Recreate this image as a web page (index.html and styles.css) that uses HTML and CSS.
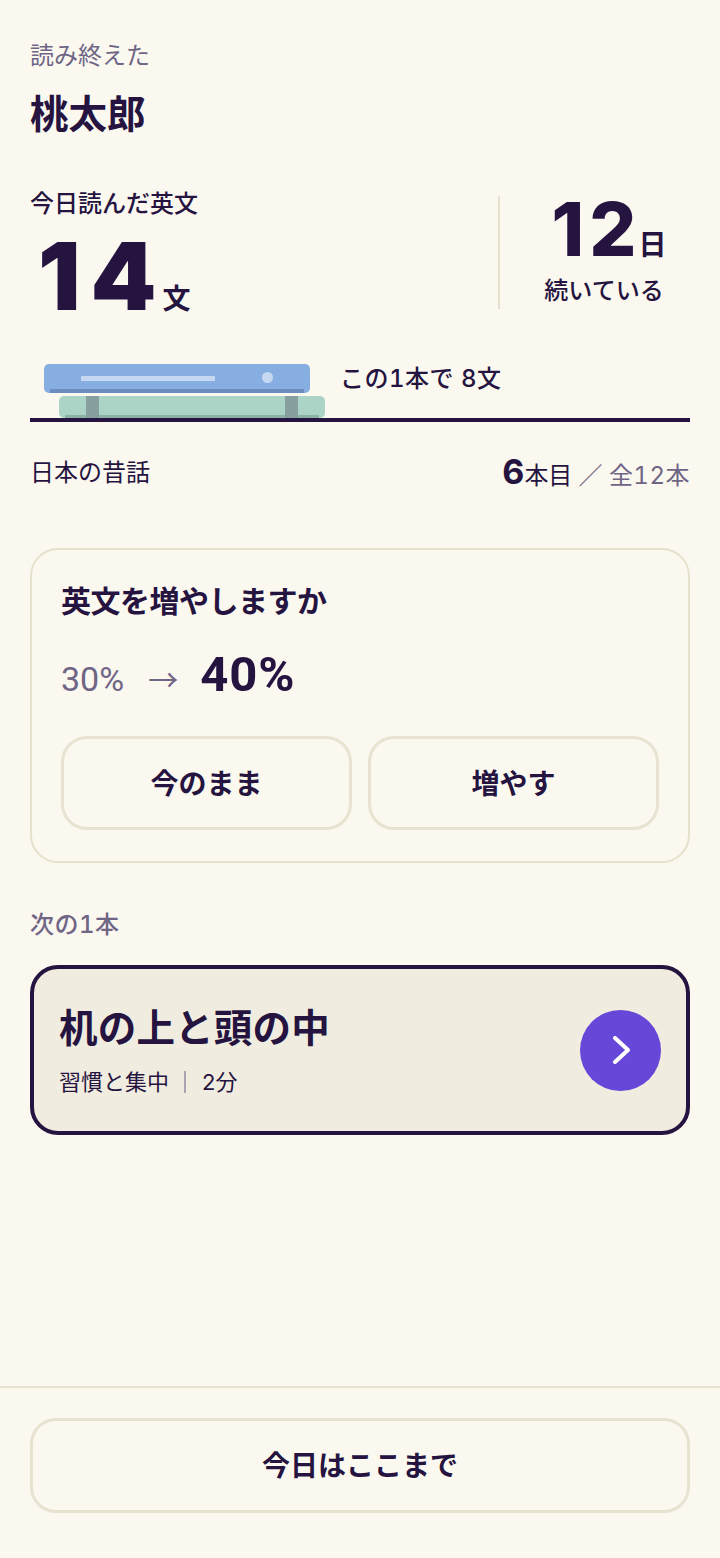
FILE: index.html
```html
<!DOCTYPE html>
<html lang="ja">
<head>
  <meta charset="UTF-8">
  <meta name="viewport" content="width=device-width, initial-scale=1.0">
  <title>桃太郎</title>
  <link rel="stylesheet" href="styles.css">
</head>
<body>
  <div class="page">
    <main class="content">
      <p class="eyebrow">読み終えた</p>
      <h1 class="title">桃太郎</h1>

      <section class="stats">
        <div class="stat-today">
          <p class="stat-label">今日読んだ英文</p>
          <p class="stat-big"><span class="big-num"><span class="big-first">1</span>4</span><span class="big-unit">文</span></p>
        </div>
        <div class="stat-streak">
          <p class="streak-num"><span class="mid-num"><span class="mid-first">1</span>2</span><span class="mid-unit">日</span></p>
          <p class="stat-label">続いている</p>
        </div>
      </section>

      <section class="shelf">
        <svg class="books" width="281" height="54" viewBox="0 0 281 54">
          <rect x="0" y="0" width="266" height="29" rx="5" fill="#86aee0"/>
          <path d="M6 25h254v4H6z" fill="#6b8cbc"/>
          <rect x="37" y="12" width="134" height="5" fill="#c6d8f1"/>
          <circle cx="223.500" cy="13.500" r="5.500" fill="#c6d8f1"/>
          <rect x="15" y="32" width="266" height="22" rx="5" fill="#acd4c6"/>
          <path d="M21 51h254v3H21z" fill="#8eb0a6"/>
          <rect x="42" y="32" width="13" height="22" fill="#889fa0"/>
          <rect x="241" y="32" width="13" height="22" fill="#889fa0"/>
        </svg>
        <p class="shelf-note">この1本で 8文</p>
      </section>

      <div class="series">
        <span class="series-name">日本の昔話</span>
        <span class="series-count"><b>6</b>本目<span class="muted"><span class="slash">／</span>全12本</span></span>
      </div>

      <section class="card">
        <h2 class="card-title">英文を増やしますか</h2>
        <p class="ratio"><span class="ratio-old">30%</span><span class="ratio-arrow">→</span><span class="ratio-new">40%</span></p>
        <div class="choices">
          <button class="choice" type="button">今のまま</button>
          <button class="choice" type="button">増やす</button>
        </div>
      </section>

      <p class="next-label">次の1本</p>
      <a class="next" href="#">
        <div>
          <h2 class="next-title">机の上と頭の中</h2>
          <p class="next-meta">習慣と集中<span class="pipe"></span>2分</p>
        </div>
        <span class="next-go">
          <svg width="24" height="28" viewBox="0 0 24 28"><path d="M6 2l13 12L6 26" fill="none" stroke="#fff" stroke-width="4" stroke-linecap="round" stroke-linejoin="round"/></svg>
        </span>
      </a>
    </main>

    <footer class="footer">
      <button class="finish" type="button">今日はここまで</button>
    </footer>
  </div>
</body>
</html>
```

FILE: styles.css
```css
* {
  box-sizing: border-box;
}

body {
  margin: 0;
  background-color: #fbf8f0;
  color: #261440;
  font-family: Inter, "Noto Sans CJK JP", sans-serif;
}

p, h1, h2 {
  margin: 0;
}

.page {
  height: 1558px;
  display: flex;
  flex-direction: column;
}

.content {
  flex: 1;
  padding: 40px 30px 0;
}

.eyebrow {
  font-size: 24px;
  line-height: 32px;
  color: #6f6585;
}

.title {
  margin-top: 16px;
  font-size: 38.500px;
  line-height: 52px;
  font-weight: 700;
}

/* stats */
.stats {
  display: flex;
  margin-top: 48px;
  height: 136px;
}

.stat-today {
  flex: 1;
}

.stat-label {
  font-size: 24px;
  line-height: 32px;
  font-weight: 500;
}

.stat-big {
  height: 92px;
  margin-top: 10px;
  padding-left: 8px;
  line-height: 92px;
  white-space: nowrap;
}

.big-num {
  font-size: 94px;
  font-weight: 900;
}

.big-first {
  margin-right: 10px;
}

.big-unit {
  margin-left: 6px;
  font-size: 28px;
  line-height: 1;
  font-weight: 700;
  vertical-align: 1px;
}

.stat-streak {
  width: 192px;
  height: 113px;
  margin-top: 8px;
  border-left: 2px solid #e6e1cc;
  text-align: center;
  padding-left: 18px;
}

.streak-num {
  height: 74px;
  line-height: 66px;
  margin-bottom: 5px;
  padding-left: 10px;
  white-space: nowrap;
}

.mid-num {
  font-size: 74px;
  font-weight: 800;
}

.mid-first {
  margin-right: 5px;
}

.mid-unit {
  margin-left: 2px;
  font-size: 28px;
  line-height: 1;
  font-weight: 700;
  vertical-align: 1px;
}

/* shelf */
.shelf {
  display: flex;
  margin-top: 40px;
  height: 58px;
  padding-left: 14px;
  border-bottom: 4px solid #261440;
}

.books {
  display: block;
  flex-shrink: 0;
}

.shelf-note {
  margin-left: 15px;
  font-size: 24px;
  line-height: 30px;
  font-weight: 500;
  letter-spacing: 0.500px;
  font-variant-numeric: tabular-nums;
}

.series {
  display: flex;
  justify-content: space-between;
  align-items: flex-start;
  height: 42px;
  margin-top: 31px;
  font-size: 24px;
  line-height: 40px;
}

.series-count {
  margin-top: 2px;
}

.series-count b {
  font-size: 34px;
  line-height: 1;
  font-weight: 700;
}

.muted {
  color: #6f6585;
  letter-spacing: 0.500px;
  font-variant-numeric: tabular-nums;
}

.slash {
  margin: 0 6px;
  font-weight: 500;
}

/* card */
.card {
  margin-top: 53px;
  height: 315px;
  padding: 30px 29px 0;
  border: 2px solid #e6e1cc;
  border-radius: 28px;
}

.card-title {
  font-size: 30px;
  line-height: 42px;
  font-weight: 700;
  letter-spacing: -0.500px;
}

.ratio {
  display: flex;
  align-items: baseline;
  margin-top: 23px;
  line-height: 60px;
  font-family: Roboto, sans-serif;
}

.ratio-old {
  font-size: 34px;
  color: #6f6585;
}

.ratio-arrow {
  margin: 0 22px 0 24px;
  font-family: "Noto Sans CJK JP", sans-serif;
  font-size: 30px;
  line-height: 1;
  color: #6f6585;
}

.ratio-new {
  font-size: 49px;
  font-weight: 700;
  letter-spacing: 1px;
}

.choices {
  display: flex;
  gap: 16px;
  margin-top: 27px;
}

.choice, .finish {
  padding: 0 0 3px;
  background: none;
  color: inherit;
  font-family: inherit;
  font-weight: 700;
  border: 3px solid #e8e2d0;
  border-radius: 26px;
}

.choice {
  flex: 1;
  height: 94px;
  font-size: 28px;
}

/* next */
.next-label {
  margin-top: 46px;
  font-size: 24px;
  line-height: 32px;
  font-weight: 500;
  color: #6f6585;
  letter-spacing: 0.500px;
  font-variant-numeric: tabular-nums;
}

.next {
  display: flex;
  justify-content: space-between;
  align-items: center;
  margin-top: 24px;
  height: 170px;
  padding: 0 25px;
  background-color: #f1ece0;
  border: 4px solid #261440;
  border-radius: 28px;
  color: inherit;
  text-decoration: none;
}

.next-title {
  font-size: 38.500px;
  line-height: 52px;
  font-weight: 700;
  letter-spacing: 0.200px;
}

.next-meta {
  display: flex;
  align-items: center;
  margin-top: 12px;
  font-size: 22px;
  line-height: 32px;
}

.pipe {
  width: 2px;
  height: 22px;
  margin: 0 16px 0 15px;
  background-color: #a9a3b2;
}

.next-go {
  display: flex;
  align-items: center;
  justify-content: center;
  width: 81px;
  height: 81px;
  border-radius: 50%;
  background-color: #6747d7;
}

/* footer */
.footer {
  height: 172px;
  padding: 30px 30px 0;
  border-top: 2px solid #e8e2d0;
}

.finish {
  width: 100%;
  height: 95px;
  font-size: 28px;
}
```
